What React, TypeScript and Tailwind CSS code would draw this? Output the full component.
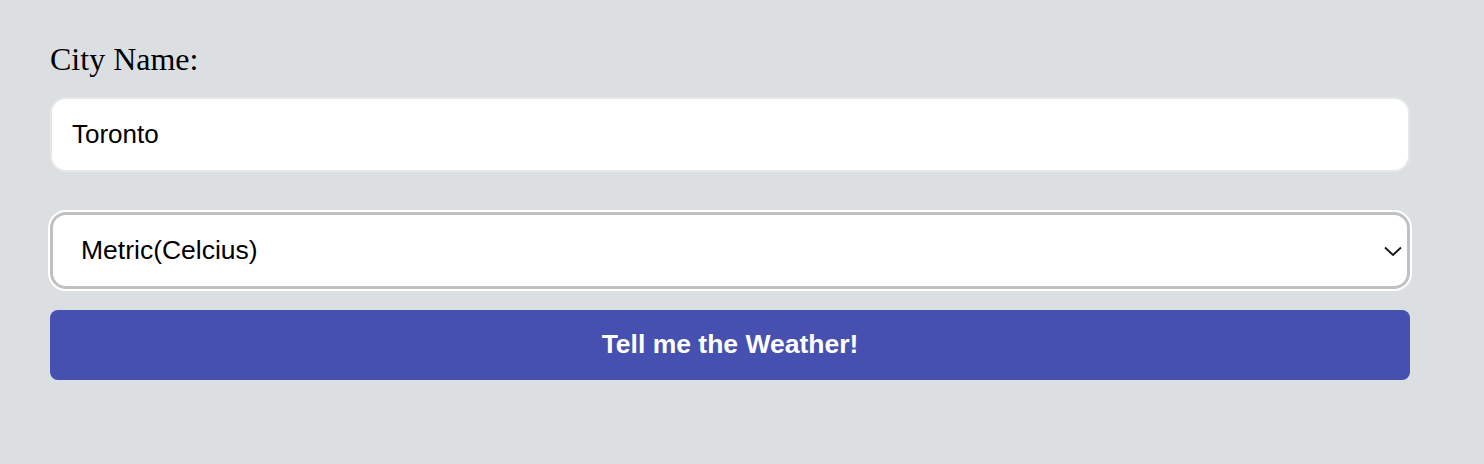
import React from "react";

export default function App() {
  return (
    <div className="min-h-[464px] w-full bg-[#dcdfe2]">
      <div className="ml-[50px] w-[1360px] pt-[41px]">
        <label
          className="block text-[32px] leading-[37px] text-black"
          style={{ fontFamily: '"Liberation Serif", "Times New Roman", serif' }}
        >
          City Name:
        </label>
        <input
          type="text"
          defaultValue="Toronto"
          className="mt-[19px] block h-[75px] w-full rounded-2xl border-2 border-[#e7e7e7] bg-white px-[20px] text-[26px] text-black outline-none"
          style={{ fontFamily: '"Liberation Sans", Arial, sans-serif' }}
        />
        <div className="relative mt-[40px]">
          <select
            defaultValue="metric"
            className="block h-[77px] w-full appearance-none rounded-[16px] border-[3px] border-[#c0c0c0] bg-white pl-[28px] text-[26.5px] text-black shadow-[0_0_0_2px_#ffffff] outline-none"
            style={{ fontFamily: '"Liberation Sans", Arial, sans-serif' }}
          >
            <option value="metric">Metric(Celcius)</option>
            <option value="imperial">Imperial(Fahrenheit)</option>
          </select>
          <svg
            className="pointer-events-none absolute left-[1334px] top-[34px]"
            width="18"
            height="11"
            viewBox="0 0 18 11"
            fill="none"
          >
            <path d="M1 1.5 L9 9 L17 1.5" stroke="#1a1a1a" strokeWidth="1.9" />
          </svg>
        </div>
        <button
          className="mt-[21px] flex h-[70px] w-full items-center justify-center rounded-lg bg-[#4650b0] text-[26.5px] font-bold text-white"
          style={{ fontFamily: '"Liberation Sans", Arial, sans-serif' }}
        >
          Tell me the Weather!
        </button>
      </div>
    </div>
  );
}
